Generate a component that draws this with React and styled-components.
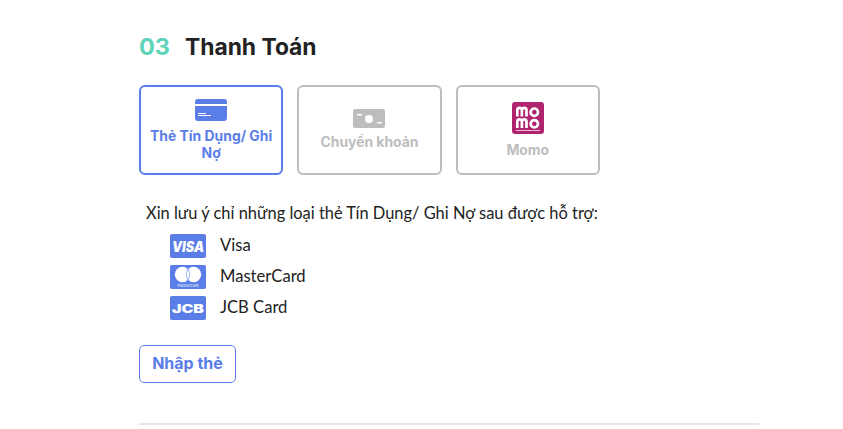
import React from "react";
import styled, { createGlobalStyle } from "styled-components";

const BLUE = "#5a7de8";
const GREY = "#bdbdbd";

const GlobalStyle = createGlobalStyle`
  html, body {
    margin: 0;
    background: #fff;
    font-family: "Lato", "Liberation Sans", sans-serif;
  }
`;

const Section = styled.section`
  width: 620px;
  margin-left: 139px;
  padding-top: 30px;
  height: 393px;
  border-bottom: 2px solid #e6e6e6;
`;

const Heading = styled.h2`
  display: flex;
  align-items: center;
  gap: 15px;
  margin: 0;
  height: 32px;
  font-family: "Inter", sans-serif;
  font-size: 22.8px;
  font-weight: 700;
  color: #222;
`;

const StepNumber = styled.span`
  color: #5dd3b8;
  font-size: 23.5px;
`;

const Methods = styled.div`
  display: flex;
  gap: 14px;
  margin-top: 23px;
`;

const Method = styled.button`
  box-sizing: border-box;
  display: flex;
  flex-direction: column;
  align-items: center;
  width: 144.3px;
  height: 90px;
  padding: ${(p) => p.$pad}px 6px 0;
  background: #fff;
  border: 2px solid ${(p) => (p.$active ? BLUE : GREY)};
  border-radius: 6px;
  color: ${(p) => (p.$active ? BLUE : GREY)};
  font-family: "Inter", sans-serif;
  font-size: 13.9px;
  font-weight: 700;
  line-height: 17px;
  text-align: center;
`;

const MethodIcon = styled.svg`
  flex: none;
  margin-bottom: ${(p) => p.$gap}px;
`;

const Note = styled.p`
  margin: 28px 0 0 7px;
  font-size: 16.45px;
  line-height: 20px;
  color: #222;
`;

const CardList = styled.ul`
  display: flex;
  flex-direction: column;
  gap: 7px;
  list-style: none;
  margin: 11px 0 0 31px;
  padding: 0;
`;

const CardRow = styled.li`
  display: flex;
  align-items: center;
  gap: 14px;
  height: 24px;
  font-size: 16.6px;
  color: #222;
`;

const CardName = styled.span`
  margin-bottom: 2px;
`;

const CardBadge = styled.svg`
  flex: none;
  display: block;
`;

const EnterButton = styled.button`
  display: block;
  box-sizing: border-box;
  width: 97px;
  height: 38px;
  margin-top: 25px;
  padding: 0 0 2px;
  background: #fff;
  border: 1px solid ${BLUE};
  border-radius: 5px;
  color: ${BLUE};
  font-family: "Inter", sans-serif;
  font-size: 16px;
  font-weight: 700;
`;

const CreditIcon = () => (
  <MethodIcon $gap={7} width="32" height="22" viewBox="0 0 32 22">
    <path fill={BLUE} d="M3 0h26a3 3 0 0 1 3 3v2H0V3a3 3 0 0 1 3-3zM0 7h32v12a3 3 0 0 1-3 3H3a3 3 0 0 1-3-3z" />
    <rect x="3" y="14" width="8" height="1" fill="#fff" />
    <rect x="3" y="16" width="13" height="1" fill="#fff" />
  </MethodIcon>
);

const CashIcon = () => (
  <MethodIcon $gap={6} width="32" height="19" viewBox="0 0 32 19">
    <rect width="32" height="19" rx="2" fill={GREY} />
    <circle cx="16" cy="10" r="4" fill="#fff" />
    <rect x="4" y="5" width="5" height="1.5" fill="#fff" />
    <rect x="24" y="13" width="5" height="1.5" fill="#fff" />
  </MethodIcon>
);

const MomoIcon = () => (
  <MethodIcon $gap={8} width="32" height="32" viewBox="0 0 32 32">
    <rect width="32" height="32" rx="3" fill="#b0246f" />
    <g fill="none" stroke="#fff" strokeWidth="2.7">
      <path d="M5.3 14.5V8.2a2.3 2.3 0 0 1 4.6 0v6.3M9.9 8.2a2.3 2.3 0 0 1 4.6 0v6.3" />
      <circle cx="22.3" cy="10.2" r="3.7" />
      <path d="M5.3 26V19.7a2.3 2.3 0 0 1 4.6 0V26M9.9 19.7a2.3 2.3 0 0 1 4.6 0V26" />
      <circle cx="22.3" cy="21.8" r="3.7" />
    </g>
    <rect x="4" y="28" width="24" height="1" fill="#e9b8d3" />
  </MethodIcon>
);

const Badge = ({ children }) => (
  <CardBadge width="36" height="24" viewBox="0 0 36 24">
    <rect width="36" height="24" rx="2" fill={BLUE} />
    {children}
  </CardBadge>
);

const VisaBadge = () => (
  <Badge>
    <text x="18" y="17.5" textAnchor="middle" fill="#fff" fontFamily="Inter" fontWeight="900" fontStyle="italic" fontSize="14" textLength="32" lengthAdjust="spacingAndGlyphs">VISA</text>
  </Badge>
);

const MasterBadge = () => (
  <Badge>
    <circle cx="12.5" cy="9.5" r="7.7" fill="#fff" />
    <circle cx="23.5" cy="9.5" r="7.7" fill="#fff" />
    <g fill="none" stroke={BLUE} strokeWidth="0.6">
      <path d="M16.5 3.2a7.7 7.7 0 0 1 0 12.6" />
      <path d="M19.5 3.2a7.7 7.7 0 0 0 0 12.6" />
    </g>
    <text x="18" y="21.8" textAnchor="middle" fill="#dfe6fb" fontFamily="Inter" fontWeight="500" fontSize="4">mastercard</text>
  </Badge>
);

const JcbBadge = () => (
  <Badge>
    <text x="18" y="16.8" textAnchor="middle" fill="#fff" fontFamily="Inter" fontWeight="900" fontSize="12" textLength="32" lengthAdjust="spacingAndGlyphs">JCB</text>
  </Badge>
);

const cards = [
  { name: "Visa", Logo: VisaBadge },
  { name: "MasterCard", Logo: MasterBadge },
  { name: "JCB Card", Logo: JcbBadge },
];

export default function App() {
  return (
    <>
      <GlobalStyle />
      <Section>
        <Heading>
          <StepNumber>03</StepNumber>
          Thanh Toán
        </Heading>
        <Methods>
          <Method $active $pad={12}>
            <CreditIcon />
            Thẻ Tín Dụng/ Ghi Nợ
          </Method>
          <Method $pad={22}>
            <CashIcon />
            Chuyển khoản
          </Method>
          <Method $pad={15}>
            <MomoIcon />
            Momo
          </Method>
        </Methods>
        <Note>Xin lưu ý chỉ những loại thẻ Tín Dụng/ Ghi Nợ sau được hỗ trợ:</Note>
        <CardList>
          {cards.map(({ name, Logo }) => (
            <CardRow key={name}>
              <Logo />
              <CardName>{name}</CardName>
            </CardRow>
          ))}
        </CardList>
        <EnterButton>Nhập thẻ</EnterButton>
      </Section>
    </>
  );
}
